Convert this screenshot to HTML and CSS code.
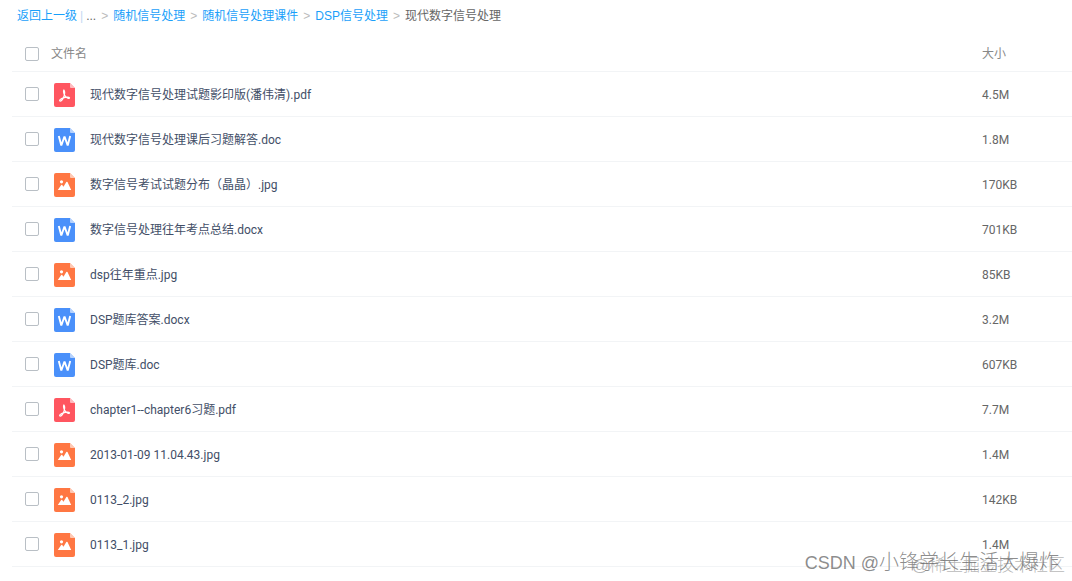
FILE: index.html
```html
<!DOCTYPE html>
<html lang="zh-CN">
<head>
    <meta charset="UTF-8">
    <meta name="viewport" content="width=device-width, initial-scale=1.0">
    <title>现代数字信号处理</title>
    <link rel="stylesheet" href="styles.css">
</head>
<body>
    <!-- file type icons -->
    <svg class="icon-defs" width="0" height="0" aria-hidden="true">
        <symbol id="icon-page" viewBox="0 0 21 24">
            <path fill="currentColor" d="M2 0h14l5 5v17a2 2 0 0 1-2 2H2a2 2 0 0 1-2-2V2a2 2 0 0 1 2-2z"/>
            <path fill="#fff" fill-opacity=".6" d="M16 0l5 5h-4a1 1 0 0 1-1-1z"/>
        </symbol>
        <symbol id="icon-pdf" viewBox="0 0 21 24">
            <use href="#icon-page"/>
            <path fill="none" stroke="#fff" stroke-width="1.2" stroke-linecap="round" stroke-linejoin="round" d="M9.800 7c1.300 1.600.9 4.700-.3 7.400-1 2.200-2.400 3.900-3.600 3.600-.9-.9 1-2.300 3.500-3.100 2.200-.7 5.500-1.300 6.100-.1-.2 1.300-2.900.2-4.300-1.700-1.300-1.800-2.200-5.100-1.400-6.100z"/>
        </symbol>
        <symbol id="icon-doc" viewBox="0 0 21 24">
            <use href="#icon-page"/>
            <path fill="none" stroke="#fff" stroke-width="1.900" stroke-linejoin="bevel" d="M4.800 8l2.500 9.500 3.200-9 3.200 9 2.500-9.500"/>
        </symbol>
        <symbol id="icon-img" viewBox="0 0 21 24">
            <use href="#icon-page"/>
            <circle cx="7.500" cy="8.800" r="1.600" fill="#fff"/>
            <path fill="#fff" d="M3.800 17l3.400-4.900q.5-.6 1 0l1.300 1.700 2.800-4.700q.6-.8 1.200 0l3.700 7.900z"/>
        </symbol>
    </svg>

    <nav class="breadcrumb">
        <a href="#">返回上一级</a><span class="divider">|</span><span class="more">...</span>
        <span class="arrow">&gt;</span><a href="#">随机信号处理</a>
        <span class="arrow">&gt;</span><a href="#">随机信号处理课件</a>
        <span class="arrow">&gt;</span><a href="#">DSP信号处理</a>
        <span class="arrow">&gt;</span><span class="current">现代数字信号处理</span>
    </nav>

    <table class="file-list">
        <thead>
            <tr>
                <th class="col-check"><input type="checkbox" id="all" aria-label="全选"></th>
                <th class="col-name">文件名</th>
                <th class="col-size">大小</th>
            </tr>
        </thead>
        <tbody>
            <tr>
                <td><input type="checkbox" id="f1"></td>
                <td><label class="file" for="f1"><svg class="icon pdf"><use href="#icon-pdf"/></svg>现代数字信号处理试题影印版(潘伟清).pdf</label></td>
                <td class="size">4.5M</td>
            </tr>
            <tr>
                <td><input type="checkbox" id="f2"></td>
                <td><label class="file" for="f2"><svg class="icon doc"><use href="#icon-doc"/></svg>现代数字信号处理课后习题解答.doc</label></td>
                <td class="size">1.8M</td>
            </tr>
            <tr>
                <td><input type="checkbox" id="f3"></td>
                <td><label class="file" for="f3"><svg class="icon img"><use href="#icon-img"/></svg>数字信号考试试题分布（晶晶）.jpg</label></td>
                <td class="size">170KB</td>
            </tr>
            <tr>
                <td><input type="checkbox" id="f4"></td>
                <td><label class="file" for="f4"><svg class="icon doc"><use href="#icon-doc"/></svg>数字信号处理往年考点总结.docx</label></td>
                <td class="size">701KB</td>
            </tr>
            <tr>
                <td><input type="checkbox" id="f5"></td>
                <td><label class="file" for="f5"><svg class="icon img"><use href="#icon-img"/></svg>dsp往年重点.jpg</label></td>
                <td class="size">85KB</td>
            </tr>
            <tr>
                <td><input type="checkbox" id="f6"></td>
                <td><label class="file" for="f6"><svg class="icon doc"><use href="#icon-doc"/></svg>DSP题库答案.docx</label></td>
                <td class="size">3.2M</td>
            </tr>
            <tr>
                <td><input type="checkbox" id="f7"></td>
                <td><label class="file" for="f7"><svg class="icon doc"><use href="#icon-doc"/></svg>DSP题库.doc</label></td>
                <td class="size">607KB</td>
            </tr>
            <tr>
                <td><input type="checkbox" id="f8"></td>
                <td><label class="file" for="f8"><svg class="icon pdf"><use href="#icon-pdf"/></svg>chapter1--chapter6习题.pdf</label></td>
                <td class="size">7.7M</td>
            </tr>
            <tr>
                <td><input type="checkbox" id="f9"></td>
                <td><label class="file" for="f9"><svg class="icon img"><use href="#icon-img"/></svg>2013-01-09 11.04.43.jpg</label></td>
                <td class="size">1.4M</td>
            </tr>
            <tr>
                <td><input type="checkbox" id="f10"></td>
                <td><label class="file" for="f10"><svg class="icon img"><use href="#icon-img"/></svg>0113_2.jpg</label></td>
                <td class="size">142KB</td>
            </tr>
            <tr>
                <td><input type="checkbox" id="f11"></td>
                <td><label class="file" for="f11"><svg class="icon img"><use href="#icon-img"/></svg>0113_1.jpg</label></td>
                <td class="size">1.4M</td>
            </tr>
        </tbody>
    </table>

    <div class="watermark community">@稀土掘金技术社区</div>
    <div class="watermark author"><span class="site">CSDN @</span>小锋学长生活大爆炸</div>
</body>
</html>
```

FILE: styles.css
```css
* {
    box-sizing: border-box;
}
body {
    margin: 0;
    min-height: 100vh;
    position: relative;
    background: #fff;
    color: #424e67;
    font-family: Roboto, "Noto Sans CJK SC", sans-serif;
    font-size: 12px;
    line-height: 18px;
}
.icon-defs {
    position: absolute;
}
.breadcrumb {
    display: flex;
    align-items: center;
    height: 35px;
    padding: 0 17px 4px;
    color: #666;
    font-family: "Liberation Sans", "Noto Sans CJK SC", sans-serif;
}
.breadcrumb a {
    color: #1a9ffa;
    text-decoration: none;
}
.divider {
    margin: 0 3px;
    color: #c4d8f2;
}
.arrow {
    margin: 0 5px;
    color: #bbb;
}
.file-list {
    width: calc(100% - 12px);
    margin-left: 12px;
    border-collapse: separate;
    border-spacing: 0;
    table-layout: fixed;
}
.file-list th,
.file-list td {
    height: 45px;
    padding: 0;
    border-bottom: 1px solid #f2f4f6;
    text-align: left;
    font-weight: normal;
    vertical-align: middle;
}
.file-list th {
    height: 37px;
    padding-top: 2px;
    color: #888;
}
.col-check {
    width: 39px;
}
.col-size {
    width: 90px;
}
.file-list .size {
    padding-top: 2px;
    color: #666;
}
input[type="checkbox"] {
    appearance: none;
    display: block;
    width: 14px;
    height: 14px;
    margin: 0 0 0 13px;
    border: 1px solid #b9bfc5;
    border-radius: 2px;
    background: #fff;
}
input[type="checkbox"]:checked {
    border-color: #09aaff;
    background: #09aaff;
}
.file {
    display: flex;
    align-items: center;
    gap: 15px;
    padding: 2px 0 0 3px;
}
.icon {
    flex: none;
    width: 21px;
    height: 24px;
}
.pdf { color: #ff5660; }
.doc { color: #4a90fa; }
.img { color: #ff7743; }

/* watermarks lie over the last row */
.watermark {
    position: absolute;
    white-space: nowrap;
    pointer-events: none;
    font-family: "Liberation Sans", "Noto Sans CJK SC", sans-serif;
    font-weight: 300;
}
.author {
    right: 13px;
    bottom: 4px;
    color: rgba(90, 90, 90, .7);
    font-size: 20px;
    line-height: 28px;
}
.site {
    font-size: 18px;
}
.community {
    right: 7px;
    bottom: 1px;
    color: rgba(110, 110, 110, .5);
    font-size: 17px;
    line-height: 28px;
}
```
